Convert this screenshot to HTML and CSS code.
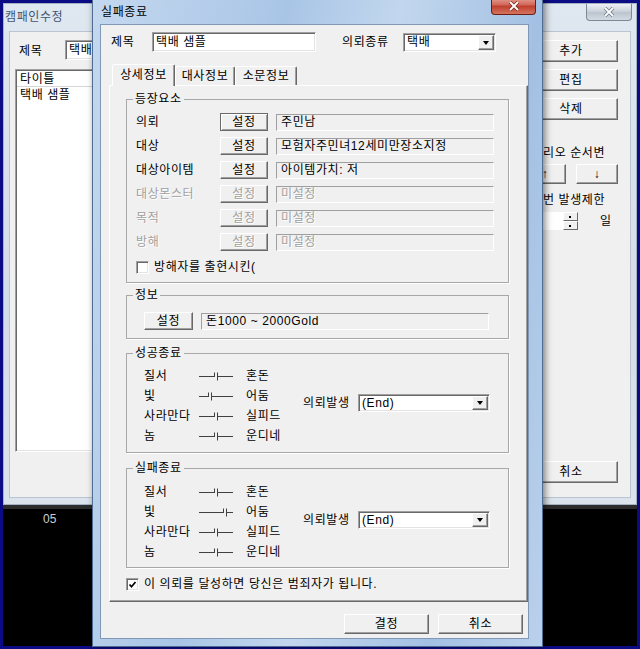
FILE: index.html
```html
<!DOCTYPE html>
<html lang="ko">
<head>
    <meta charset="UTF-8">
    <meta name="viewport" content="width=device-width, initial-scale=1.0">
    <title>실패종료</title>
    <link rel="stylesheet" href="styles.css">
</head>
<body>
<div class="screen">
    <div class="desktop">
        <!-- window underneath -->
        <div class="window back-window">
            <div class="caption">
                <span class="caption-text">캠패인수정</span>
                <span class="close-btn inactive">
                    <svg width="12" height="10" viewBox="0 0 12 10"><path class="x-out" d="M2 1l8 8M10 1l-8 8"/><path class="x-in" d="M2 1l8 8M10 1l-8 8"/></svg>
                </span>
            </div>
            <div class="client back-client">
                <div class="back-main">
                    <div class="back-row">
                        <span class="back-label">제목</span>
                        <div class="edit back-title">택배</div>
                    </div>
                    <div class="listbox">
                        <div class="list-head">타이틀</div>
                        <div class="list-item">택배 샘플</div>
                    </div>
                </div>
                <div class="back-side">
                    <button class="btn side-btn">추가</button>
                    <button class="btn side-btn">편집</button>
                    <button class="btn side-btn">삭제</button>
                    <div class="side-label">리오 순서변</div>
                    <div class="side-pair">
                        <button class="btn arrow-btn">↑</button>
                        <button class="btn arrow-btn">↓</button>
                    </div>
                    <div class="side-label">번 발생제한</div>
                    <div class="spin-row">
                        <div class="spin">
                            <div class="spin-edit"></div>
                            <div class="spin-btns">
                                <span class="spin-up"></span>
                                <span class="spin-down"></span>
                            </div>
                        </div>
                        <span class="spin-unit">일</span>
                    </div>
                    <button class="btn side-btn side-cancel">취소</button>
                </div>
            </div>
        </div>
        <div class="strip"><span class="clock">05</span></div>
    </div>

    <!-- active dialog -->
    <div class="window dialog">
        <div class="caption">
            <span class="caption-text">실패종료</span>
            <span class="close-btn active">
                <svg width="12" height="10" viewBox="0 0 12 10"><path class="x-out" d="M2 1l8 8M10 1l-8 8"/><path class="x-in" d="M2 1l8 8M10 1l-8 8"/></svg>
            </span>
        </div>
        <div class="client dlg-client">
            <div class="dlg-top">
                <span class="dlg-label">제목</span>
                <div class="edit dlg-title">택배 샘플</div>
                <span class="dlg-label kind-label">의뢰종류</span>
                <div class="combo kind-combo"><span class="combo-text">택배</span><span class="combo-btn"></span></div>
            </div>

            <div class="tabs">
                <span class="tab selected">상세정보</span>
                <span class="tab tab-2">대사정보</span>
                <span class="tab tab-3">소문정보</span>
            </div>

            <div class="tab-panel">
                <fieldset class="group g-appear">
                    <legend>등장요소</legend>
                    <div class="appear-grid">
                        <span>의뢰</span>
                        <button class="btn set-btn focused">설정</button>
                        <div class="static">주민남</div>

                        <span>대상</span>
                        <button class="btn set-btn">설정</button>
                        <div class="static">모험자주민녀12세미만장소지정</div>

                        <span>대상아이템</span>
                        <button class="btn set-btn">설정</button>
                        <div class="static">아이템가치: 저</div>

                        <span class="off">대상몬스터</span>
                        <button class="btn set-btn off">설정</button>
                        <div class="static off">미설정</div>

                        <span class="off">목적</span>
                        <button class="btn set-btn off">설정</button>
                        <div class="static off">미설정</div>

                        <span class="off">방해</span>
                        <button class="btn set-btn off">설정</button>
                        <div class="static off">미설정</div>
                    </div>
                    <div class="check-row appear-check">
                        <span class="check"></span>
                        <span class="check-text">방해자를 출현시킨(</span>
                    </div>
                </fieldset>

                <fieldset class="group g-info">
                    <legend>정보</legend>
                    <div class="info-row">
                        <button class="btn set-btn">설정</button>
                        <div class="static info-static">돈1000 ~ 2000Gold</div>
                    </div>
                </fieldset>

                <fieldset class="group g-success">
                    <legend>성공종료</legend>
                    <div class="end-body">
                        <div class="attr-grid">
                            <span>질서</span>
                            <svg class="track" width="34" height="10" viewBox="0 0 34 10"><path d="M0 5.5H15.5M15.5 1.5v4.5M18.5 1.5v8M18 5.5H34"/></svg>
                            <span>혼돈</span>
                            <span>빛</span>
                            <svg class="track" width="34" height="10" viewBox="0 0 34 10"><path d="M0 5.5H9.5M9.5 1.5v4.5M12.5 1.5v8M12 5.5H34"/></svg>
                            <span>어둠</span>
                            <span>사라만다</span>
                            <svg class="track" width="34" height="10" viewBox="0 0 34 10"><path d="M0 5.5H15.5M15.5 1.5v4.5M18.5 1.5v8M18 5.5H34"/></svg>
                            <span>실피드</span>
                            <span>놈</span>
                            <svg class="track" width="34" height="10" viewBox="0 0 34 10"><path d="M0 5.5H15.5M15.5 1.5v4.5M18.5 1.5v8M18 5.5H34"/></svg>
                            <span>운디네</span>
                        </div>
                        <div class="issue success-issue">
                            <span class="issue-label">의뢰발생</span>
                            <div class="combo issue-combo"><span class="combo-text">(End)</span><span class="combo-btn"></span></div>
                        </div>
                    </div>
                </fieldset>

                <fieldset class="group g-fail">
                    <legend>실패종료</legend>
                    <div class="end-body">
                        <div class="attr-grid">
                            <span>질서</span>
                            <svg class="track" width="34" height="10" viewBox="0 0 34 10"><path d="M0 5.5H15.5M15.5 1.5v4.5M18.5 1.5v8M18 5.5H34"/></svg>
                            <span>혼돈</span>
                            <span>빛</span>
                            <svg class="track" width="34" height="10" viewBox="0 0 34 10"><path d="M0 5.5H24.5M24.5 1.5v4.5M27.5 1.5v8M27 5.5H34"/></svg>
                            <span>어둠</span>
                            <span>사라만다</span>
                            <svg class="track" width="34" height="10" viewBox="0 0 34 10"><path d="M0 5.5H15.5M15.5 1.5v4.5M18.5 1.5v8M18 5.5H34"/></svg>
                            <span>실피드</span>
                            <span>놈</span>
                            <svg class="track" width="34" height="10" viewBox="0 0 34 10"><path d="M0 5.5H15.5M15.5 1.5v4.5M18.5 1.5v8M18 5.5H34"/></svg>
                            <span>운디네</span>
                        </div>
                        <div class="issue fail-issue">
                            <span class="issue-label">의뢰발생</span>
                            <div class="combo issue-combo"><span class="combo-text">(End)</span><span class="combo-btn"></span></div>
                        </div>
                    </div>
                </fieldset>

                <div class="check-row crime-check">
                    <span class="check checked">
                        <svg width="9" height="9" viewBox="0 0 9 9"><path d="M1.5 4.5l2 2.2 4-4.7"/></svg>
                    </span>
                    <span class="check-text">이 의뢰를 달성하면 당신은 범죄자가 됩니다.</span>
                </div>
            </div>

            <div class="dlg-buttons">
                <button class="btn dlg-btn">결정</button>
                <button class="btn dlg-btn">취소</button>
            </div>
        </div>
    </div>
</div>
</body>
</html>
```

FILE: styles.css
```css
* {
    box-sizing: border-box;
}

body {
    margin: 0;
    font-family: "Liberation Sans", "Noto Sans CJK KR", sans-serif;
    font-size: 12px;
    line-height: 14px;
    letter-spacing: 0.6px;
    color: #000;
}

.screen {
    position: relative;
    width: 640px;
    height: 649px;
    padding: 3px;
    overflow: hidden;
    background-color: #0b0b86;
}

.desktop {
    height: 643px;
    background-color: #000;
}

/* ---------- window frames ---------- */

.window {
    display: flex;
    flex-direction: column;
}

.caption {
    display: flex;
    justify-content: space-between;
    align-items: flex-start;
    flex-shrink: 0;
    height: 27px;
}

.close-btn {
    display: flex;
    align-items: center;
    justify-content: center;
    border: 1px solid;
    border-top: 0;
    border-radius: 0 0 4px 4px;
}

.close-btn svg {
    fill: none;
}

.x-out {
    stroke-width: 3.4;
}

.x-in {
    stroke: #fff;
    stroke-width: 1.8;
}

.close-btn.active {
    width: 45px;
    height: 18px;
    margin-right: -7px;
    background: linear-gradient(#e9a99b, #d0685a 45%, #c0402f 55%, #d5745f);
    border-color: #6b1f16;
}

.close-btn.active .x-out {
    stroke: #7a2a1e;
}

.close-btn.inactive {
    width: 46px;
    height: 17px;
    margin-right: -1px;
    background: linear-gradient(#eef1f5, #ccd3db 45%, #bcc5cf 55%, #d3dae2);
    border-color: #7d8895;
}

.close-btn.inactive .x-out {
    stroke: #6b7683;
}

.client {
    flex: 1;
    background-color: #f0f0f0;
}

/* ---------- back window ---------- */

.back-window {
    height: 502px;
    padding: 0 5px 6px 5px;
    background: linear-gradient(#dfe7f0, #d3dde8 60%, #dbe3ec);
    border: 1px solid #a5b2c1;
}

.back-window .caption-text {
    margin: 6px 0 0 -4px;
    color: #3f5571;
}

.back-client {
    display: flex;
    padding: 0 12px 14px 5px;
    border: 1px solid #b9c5d3;
}

.back-main {
    flex: 1;
}

.back-row {
    display: flex;
    height: 20px;
    margin-top: 8px;
}

.back-label {
    width: 50px;
    padding-left: 4px;
    line-height: 22px;
}

.back-title {
    width: 440px;
}

.listbox {
    height: 383px;
    margin-top: 9px;
    background-color: #fff;
    border: 1px solid;
    border-color: #a0a0a0 #fff #fff #a0a0a0;
    box-shadow: inset 1px 1px #696969, inset -1px -1px #e3e3e3;
    padding: 1px;
}

.list-head {
    width: 120px;
    height: 16px;
    padding-left: 3px;
    line-height: 16px;
    border-right: 1px solid #d5d5d5;
    border-bottom: 1px solid #d5d5d5;
}

.list-item {
    padding: 1px 0 0 3px;
    line-height: 14px;
}

.back-side {
    display: flex;
    flex-direction: column;
    width: 94px;
    margin-left: 10px;
    padding-top: 8px;
}

.side-btn {
    height: 22px;
    margin-bottom: 7px;
}

.side-label {
    margin-top: 19px;
    padding-left: 19px;
    line-height: 14px;
}

.side-label + .side-pair {
    margin-top: 4px;
}

.side-pair {
    display: flex;
    justify-content: space-between;
    margin-bottom: -5px;
}

.arrow-btn {
    width: 42px;
    height: 20px;
}

.side-pair + .side-label {
    margin-top: 14px;
}

.spin-row {
    display: flex;
    align-items: center;
    margin-top: 5px;
}

.spin {
    display: flex;
    width: 54px;
    height: 18px;
}

.spin-edit {
    flex: 1;
    background-color: #fff;
}

.spin-btns {
    display: flex;
    flex-direction: column;
    width: 15px;
}

.spin-up,
.spin-down {
    flex: 1;
    position: relative;
    background-color: #f0f0f0;
    border: 1px solid;
    border-color: #fff #696969 #696969 #fff;
}

.spin-up::after,
.spin-down::after {
    content: "";
    position: absolute;
    left: 5px;
    top: 3px;
    width: 2px;
    height: 2px;
    background-color: #000;
}

.spin-unit {
    margin-left: 22px;
}

.side-cancel {
    margin-top: auto;
    margin-bottom: 0;
}

.strip {
    height: 141px;
    padding: 3px 0 0 40px;
    border-top: 4px solid #2c2c2c;
}

.clock {
    color: #cfcfcf;
    letter-spacing: 0;
}

/* ---------- dialog ---------- */

.dialog {
    position: absolute;
    left: 92px;
    top: -4px;
    width: 451px;
    height: 651px;
    padding: 0 13px 7px 7px;
    background: linear-gradient(100deg, #c4d8ef 0%, #a9c5e6 35%, #c2d7ee 55%, #a3c0e3 80%, #bad1ec 100%);
    border: 1px solid #4f6d92;
    box-shadow: 2px 0 7px rgba(0, 0, 0, 0.5);
}

.dialog .caption-text {
    margin: 8px 0 0 1px;
}

.dlg-client {
    border: 1px solid #7f98b6;
}

.dlg-top {
    display: flex;
    padding: 7px 0 0 10px;
}

.dlg-label {
    width: 41px;
    line-height: 21px;
}

.dlg-title {
    width: 164px;
}

.kind-label {
    width: 61px;
    margin-left: 26px;
}

.kind-combo {
    width: 93px;
    height: 19px;
    margin-top: 1px;
}

/* classic controls */

.btn {
    padding: 0;
    font: inherit;
    letter-spacing: inherit;
    color: #000;
    background-color: #f0f0f0;
    border: 1px solid;
    border-color: #fff #696969 #696969 #fff;
    box-shadow: inset -1px -1px #a0a0a0;
}

.btn.focused {
    border-color: #696969;
    box-shadow: inset 1px 1px #fff, inset -1px -1px #a0a0a0;
}

.edit {
    height: 20px;
    padding-left: 3px;
    line-height: 18px;
    background-color: #fff;
    border: 1px solid;
    border-color: #a0a0a0 #fff #fff #a0a0a0;
    box-shadow: inset 1px 1px #696969, inset -1px -1px #e3e3e3;
    white-space: nowrap;
    overflow: hidden;
}

.combo {
    display: flex;
    background-color: #fff;
    border: 1px solid;
    border-color: #a0a0a0 #fff #fff #a0a0a0;
    box-shadow: inset 1px 1px #696969, inset -1px -1px #e3e3e3;
    padding: 1px;
}

.combo-text {
    flex: 1;
    padding-left: 2px;
    line-height: 15px;
}

.combo-btn {
    display: flex;
    align-items: center;
    justify-content: center;
    width: 16px;
    background-color: #f0f0f0;
    border: 1px solid;
    border-color: #fff #696969 #696969 #fff;
    box-shadow: inset -1px -1px #a0a0a0;
}

.combo-btn::after {
    content: "";
    width: 0;
    height: 0;
    border-style: solid;
    border-width: 4px 3.5px 0;
    border-color: #000 transparent transparent;
}

.static {
    height: 17px;
    padding-left: 4px;
    line-height: 15px;
    background-color: #f0f0f0;
    border: 1px solid;
    border-color: #a0a0a0 #fff #fff #a0a0a0;
    white-space: nowrap;
}

.off {
    color: #a0a0a0;
    text-shadow: 1px 1px #fff;
}

.check {
    display: flex;
    align-items: center;
    justify-content: center;
    width: 13px;
    height: 13px;
    background-color: #fff;
    border: 1px solid;
    border-color: #a0a0a0 #fff #fff #a0a0a0;
    box-shadow: inset 1px 1px #696969, inset -1px -1px #e3e3e3;
}

.check svg {
    fill: none;
    stroke: #000;
    stroke-width: 1.7;
}

.check-row {
    display: flex;
    align-items: center;
    height: 14px;
}

.check-text {
    margin-left: 5px;
}

/* tabs */

.tabs {
    display: flex;
    align-items: flex-end;
    height: 21px;
    margin: 11px 0 0 11px;
}

.tab {
    height: 19px;
    line-height: 18px;
    text-align: center;
    border: 1px solid;
    border-bottom: 0;
    border-color: #fff #696969 transparent #fff;
    box-shadow: inset -1px 0 #a0a0a0;
    border-radius: 2px 2px 0 0;
}

.tab.selected {
    position: relative;
    z-index: 1;
    width: 63px;
    height: 22px;
    margin-bottom: -1px;
    line-height: 21px;
    background-color: #f0f0f0;
}

.tab-2 {
    width: 60px;
}

.tab-3 {
    width: 62px;
}

.tab-panel {
    width: 419px;
    height: 517px;
    margin-left: 8px;
    padding: 6px 18px 0 16px;
    border: 1px solid;
    border-color: #fff #696969 #696969 #fff;
    box-shadow: inset -1px -1px #a0a0a0;
}

/* group boxes */

.group {
    margin: 0;
    padding: 0;
    min-inline-size: 0;
    border: 1px solid #a8a8a8;
    box-shadow: 1px 1px #fff;
}

.group legend {
    margin-left: 6px;
    padding: 0 2px;
    line-height: 14px;
}

.appear-grid {
    display: grid;
    grid-template-columns: 76px 48px 218px;
    grid-auto-rows: 20px;
    column-gap: 8px;
    row-gap: 4px;
    align-items: center;
    padding: 6px 0 0 9px;
}

.set-btn {
    height: 18px;
}

.appear-check {
    margin: 8px 0 8px 9px;
}

.g-info {
    margin-top: 5px;
}

.info-row {
    display: flex;
    align-items: center;
    height: 20px;
    margin: 9px 0 7px 17px;
    gap: 8px;
}

.info-row .set-btn {
    width: 49px;
}

.info-static {
    width: 288px;
}

.g-success {
    margin-top: 7px;
}

.g-fail {
    margin-top: 8px;
}

.end-body {
    display: flex;
    padding: 6px 0 6px 17px;
}

.g-fail .end-body {
    padding: 7px 0 5px 17px;
}

.attr-grid {
    display: grid;
    grid-template-columns: 55px 47px 57px;
    grid-auto-rows: 20px;
    align-items: center;
}

.track {
    fill: none;
    stroke: #404040;
    stroke-width: 1;
}

.issue {
    display: flex;
    align-items: center;
    align-self: center;
}

.success-issue {
    margin-bottom: 6px;
}

.fail-issue {
    margin-bottom: 4px;
}

.issue-label {
    width: 55px;
}

.issue-combo {
    width: 132px;
    height: 18px;
}

.crime-check {
    margin-top: 9px;
}

.dlg-buttons {
    display: flex;
    justify-content: flex-end;
    gap: 9px;
    margin-top: 12px;
    padding-right: 5px;
}

.dlg-btn {
    width: 85px;
    height: 20px;
}
```
